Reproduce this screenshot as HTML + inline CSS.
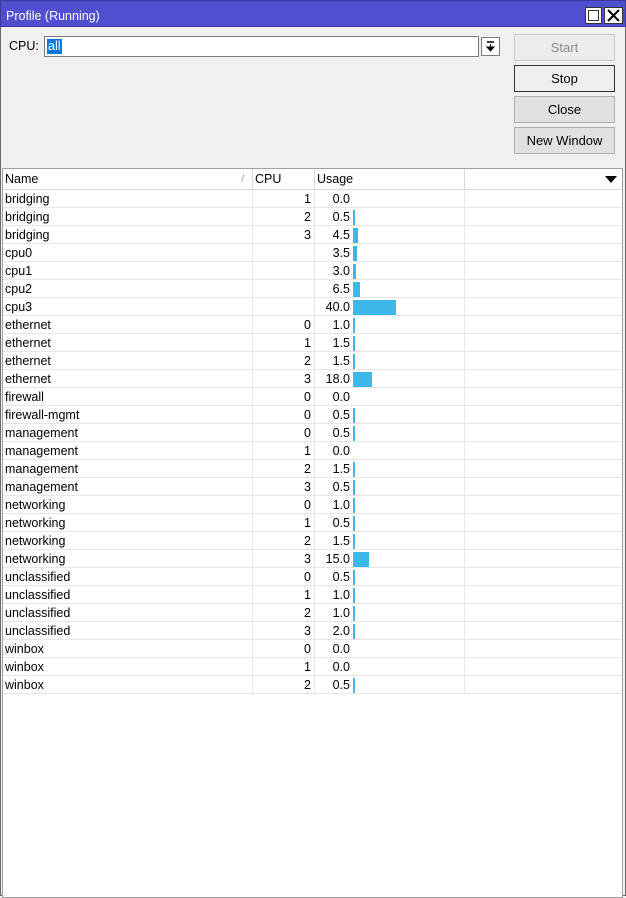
<!DOCTYPE html>
<html><head><meta charset="utf-8"><style>
*{box-sizing:border-box;margin:0;padding:0}
body{width:626px;height:896px;background:#f0f0f0;font-family:"Liberation Sans",Arial,sans-serif;font-size:12.5px;color:#000;position:relative;overflow:hidden}
.win{position:absolute;left:0;top:0;width:626px;height:896px;border:1px solid #6a6a6a;border-top:none}
.title{position:absolute;left:0;top:0;width:626px;height:27px;background:#4f4fcf;border:1px solid #3a3a9a;color:#fff;font-size:12.5px;line-height:31px;padding-left:5px}
.tb{position:absolute;top:6px;width:17px;height:17px;background:#fff;border:1px solid #333;line-height:normal}
.lbl{position:absolute;left:9px;top:39px}
.inp{position:absolute;left:44px;top:36px;width:435px;height:21px;background:#fff;border:1px solid #7a7a7a}
.inp span{position:absolute;left:2px;top:2px;background:#0078d7;color:#fff;padding:0 1px;line-height:15px}
.dd{position:absolute;left:481px;top:37px;width:19px;height:19px;background:#fff;border:1px solid #7a7a7a}
.btn{position:absolute;left:514px;width:101px;height:27px;background:#e1e1e1;border:1px solid #adadad;text-align:center;line-height:26px;font-size:13px}
.tbl{position:absolute;left:2px;top:168px;width:621px;height:730px;background:#fff;border:1px solid #a0a0a0}
.hdr{position:absolute;left:0;top:0;width:619px;height:21px;border-bottom:1px solid #d8d8d8;background:#fff}
.hc{position:absolute;top:0;height:20px;line-height:21px;padding-left:2px;border-right:1px solid #d8d8d8}
.row{position:absolute;left:0;width:619px;height:18px;border-bottom:1px solid #e6e6e6;line-height:18px}
.c{position:absolute;top:0;height:18px;border-right:1px solid #e6e6e6}
.n{left:0;width:250px;padding-left:2px}
.p{left:250px;width:62px;text-align:right;padding-right:3px}
.u{left:312px;width:150px}
.u i{position:absolute;right:114px;top:0;font-style:normal}
.u b{position:absolute;left:38px;top:2px;height:15px;background:#3db7ea}
</style></head><body>
<div class="win"></div>
<div class="title">Profile (Running)
<div class="tb" style="left:584px"><div style="position:absolute;left:2px;top:2px;width:11px;height:11px;border:1px solid #333"></div></div>
<div class="tb" style="left:603px;width:19px"><svg width="17" height="15" style="position:absolute;left:0;top:0"><path d="M3 2L14 13M14 2L3 13" stroke="#000" stroke-width="2"/></svg></div>
</div>
<div class="lbl">CPU:</div>
<div class="inp"><span>all</span></div>
<div class="dd"><svg width="17" height="17"><path d="M5 4h7" stroke="#000" stroke-width="1.5"/><path d="M8.5 6v3M5 9h7l-3.5 4z" stroke="#000" fill="#000"/></svg></div>
<div class="btn" style="top:34px;color:#8a8a8a;background:#ececec;border-color:#c8c8c8">Start</div>
<div class="btn" style="top:65px;border:1px solid #333;background:#efefef">Stop</div>
<div class="btn" style="top:96px">Close</div>
<div class="btn" style="top:127px">New Window</div>
<div class="tbl">
<div class="hdr">
<div class="hc" style="left:0;width:250px">Name<span style="position:absolute;right:8px;color:#999;font-size:10px">/</span></div>
<div class="hc" style="left:250px;width:62px">CPU</div>
<div class="hc" style="left:312px;width:150px">Usage</div>
<svg style="position:absolute;left:602px;top:7px" width="12" height="8"><path d="M0 0h12L6 7z" fill="#000"/></svg>
</div>
<div id="rows"></div>
</div>
<script>
var d=[["bridging",1,"0.0"],["bridging",2,"0.5"],["bridging",3,"4.5"],["cpu0","","3.5"],["cpu1","","3.0"],["cpu2","","6.5"],["cpu3","","40.0"],["ethernet",0,"1.0"],["ethernet",1,"1.5"],["ethernet",2,"1.5"],["ethernet",3,"18.0"],["firewall",0,"0.0"],["firewall-mgmt",0,"0.5"],["management",0,"0.5"],["management",1,"0.0"],["management",2,"1.5"],["management",3,"0.5"],["networking",0,"1.0"],["networking",1,"0.5"],["networking",2,"1.5"],["networking",3,"15.0"],["unclassified",0,"0.5"],["unclassified",1,"1.0"],["unclassified",2,"1.0"],["unclassified",3,"2.0"],["winbox",0,"0.0"],["winbox",1,"0.0"],["winbox",2,"0.5"]];
var h="";d.forEach(function(r,i){var v=parseFloat(r[2]);var w=v>0?Math.max(2,Math.round(v*1.07)):0;
h+='<div class="row" style="top:'+(21+i*18)+'px"><div class="c n">'+r[0]+'</div><div class="c p">'+r[1]+'</div><div class="c u"><i>'+r[2]+'</i>'+(w?'<b style="width:'+w+'px"></b>':'')+'</div></div>';});
document.getElementById("rows").innerHTML=h;
</script>
</body></html>
